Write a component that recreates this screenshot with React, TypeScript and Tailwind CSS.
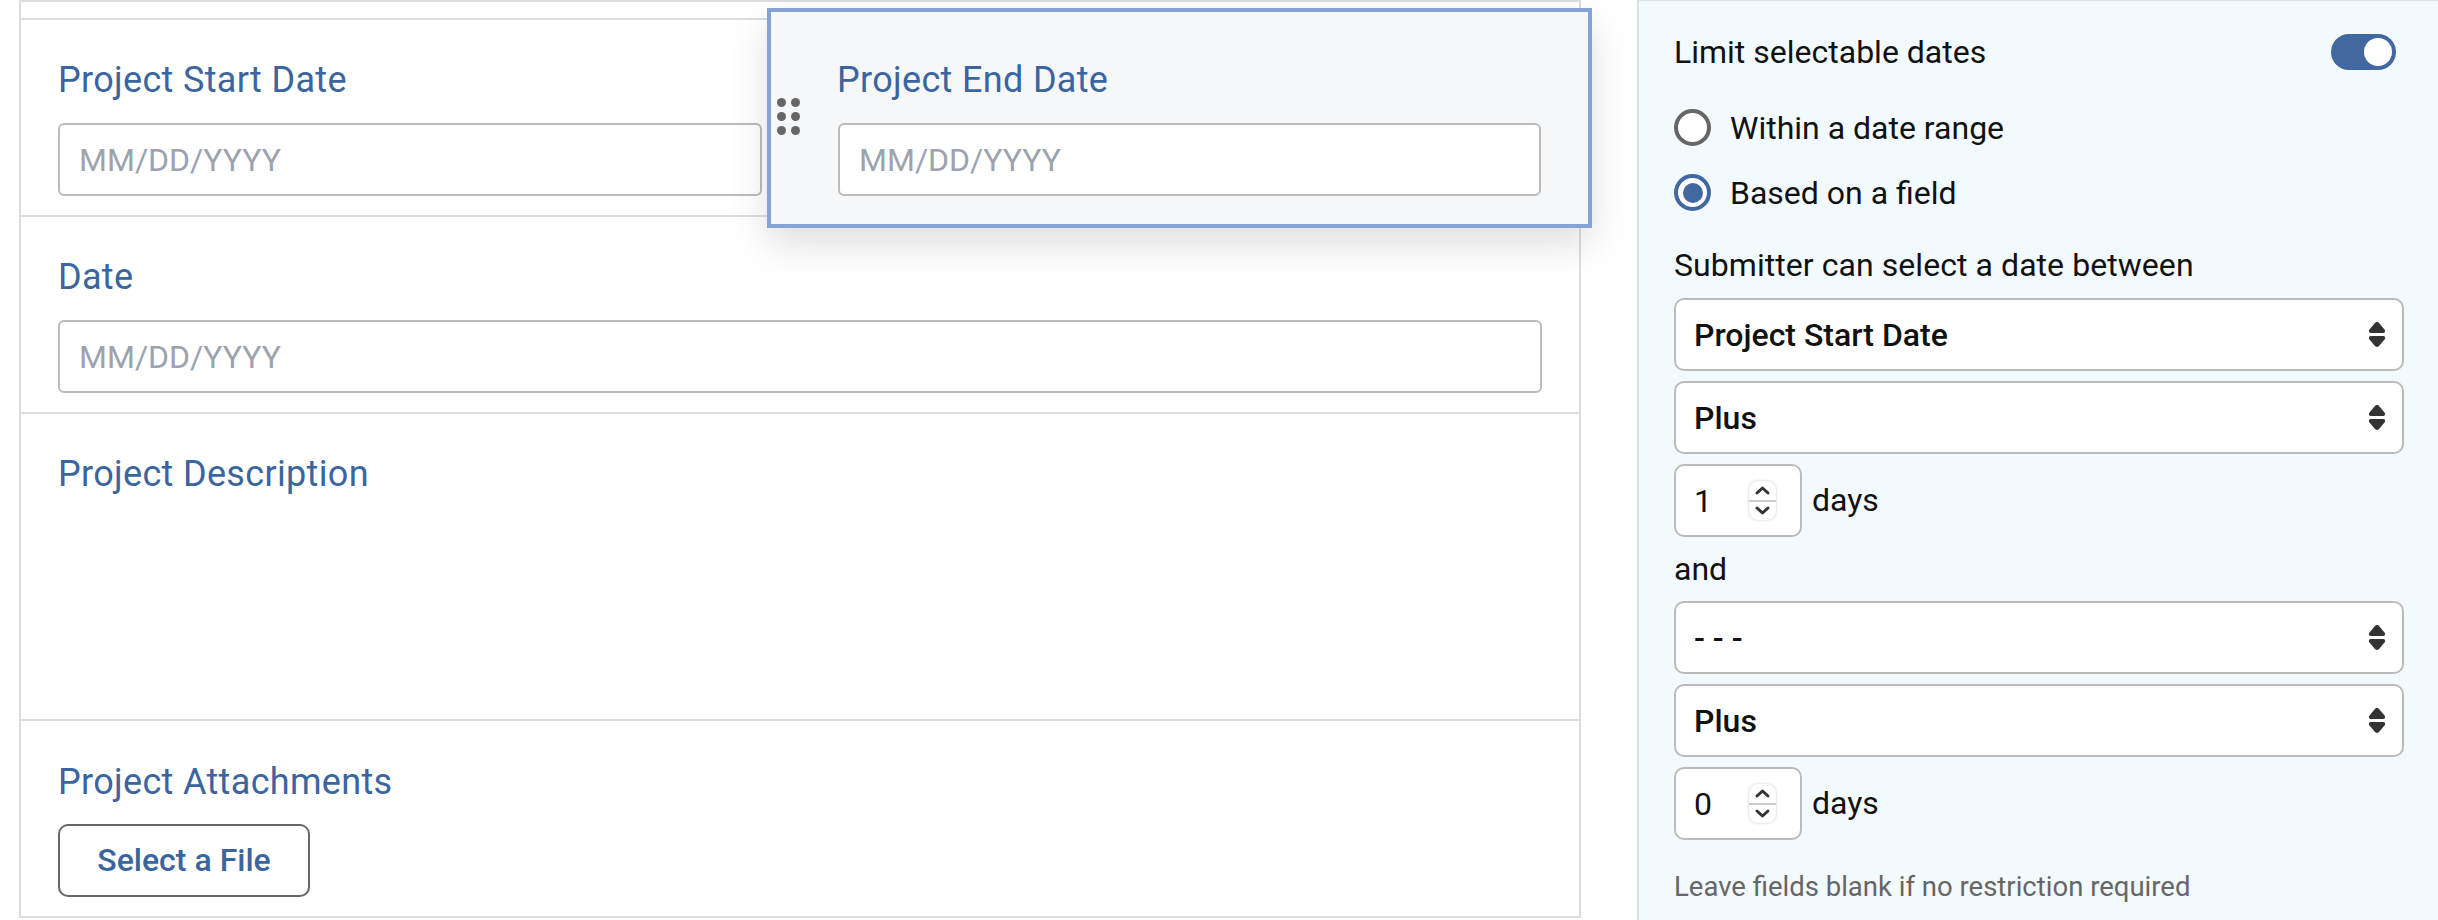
function DateInput({ className = '' }: { className?: string }) {
  return (
    <input
      readOnly
      placeholder="MM/DD/YYYY"
      className={`block h-[73px] rounded-[6px] border-2 border-[#bbbbbb] bg-white px-[19px] text-[32px] outline-none placeholder:text-[#9ca3af] ${className}`}
    />
  );
}

function FieldLabel({ children, className = '' }: { children: string; className?: string }) {
  return <div className={`h-[48px] pt-[1px] text-[36px] leading-[48px] tracking-[0.33px] text-[#3b659e] ${className}`}>{children}</div>;
}

function Row({ className = '', children }: { className?: string; children?: React.ReactNode }) {
  return <div className={`border-t-2 border-[#dddddd] pl-[37px] pt-[35px] ${className}`}>{children}</div>;
}

function SelectBox({ value, className = '' }: { value: string; className?: string }) {
  return (
    <div className={`flex h-[73px] items-center justify-between rounded-[10px] border-2 border-[#bbbbbb] bg-white pl-[18px] pr-[15px] text-[32px] font-medium text-[#111111] ${className}`}>
      <span>{value}</span>
      <svg width="20" height="27" viewBox="0 0 18 26" fill="#333333">
        <path d="M9 1 C10 1 10.8 1.6 11.4 2.3 L16.4 8.4 C17.4 9.7 16.6 11.5 15 11.5 H3 C1.4 11.5 0.6 9.7 1.6 8.4 L6.6 2.3 C7.2 1.6 8 1 9 1 Z" />
        <path d="M9 25 C10 25 10.8 24.4 11.4 23.7 L16.4 17.6 C17.4 16.3 16.6 14.5 15 14.5 H3 C1.4 14.5 0.6 16.3 1.6 17.6 L6.6 23.7 C7.2 24.4 8 25 9 25 Z" />
      </svg>
    </div>
  );
}

function NumberRow({ value, className = '' }: { value: string; className?: string }) {
  return (
    <div className={`flex items-center gap-[10px] ${className}`}>
      <div className="flex h-[73px] w-[128px] items-center justify-between rounded-[10px] border-2 border-[#bbbbbb] bg-white pl-[18px] pr-[24px] text-[32px] text-[#111111]">
        <span>{value}</span>
        <div className="flex h-[39px] w-[27px] flex-col overflow-hidden rounded-[9px] bg-white shadow-[0_0_3px_rgba(0,0,0,0.22)]">
          <div className="flex flex-1 items-center justify-center border-b border-[#cccccc]">
            <svg width="17" height="11" viewBox="0 0 17 11" fill="none" stroke="#333333" strokeWidth="3" strokeLinecap="round" strokeLinejoin="round">
              <path d="M3 8 L8.5 3 L14 8" />
            </svg>
          </div>
          <div className="flex flex-1 items-center justify-center border-t border-[#cccccc]">
            <svg width="17" height="11" viewBox="0 0 17 11" fill="none" stroke="#333333" strokeWidth="3" strokeLinecap="round" strokeLinejoin="round">
              <path d="M3 3 L8.5 8 L14 3" />
            </svg>
          </div>
        </div>
      </div>
      <span className="pb-[2px] text-[32px] text-[#111111]">days</span>
    </div>
  );
}

function Radio({ label, checked = false, className = '' }: { label: string; checked?: boolean; className?: string }) {
  return (
    <div className={`flex h-[37px] items-center gap-[19px] text-[32px] text-[#111111] ${className}`}>
      <span className={`flex size-[37px] items-center justify-center rounded-full border-[4px] bg-white ${checked ? 'border-[#41699f]' : 'border-[#666666]'}`}>
        {checked && <span className="size-[20px] rounded-full bg-[#41699f]" />}
      </span>
      {label}
    </div>
  );
}

export default function App() {
  return (
    <div className="relative flex h-[920px] w-[2438px] overflow-hidden bg-white font-['Roboto',sans-serif]">
      <div className="ml-[19px] h-[918px] w-[1562px] border-x-2 border-t-2 border-[#dddddd]">
        <div className="h-[16px]" />
        <Row className="h-[197px]">
          <FieldLabel>Project Start Date</FieldLabel>
          <DateInput className="mt-[20px] w-[704px]" />
        </Row>
        <Row className="h-[197px]">
          <FieldLabel>Date</FieldLabel>
          <DateInput className="mt-[20px] w-[1484px]" />
        </Row>
        <Row className="h-[307px]">
          <FieldLabel>Project Description</FieldLabel>
        </Row>
        <Row className="h-[199px] border-b-2">
          <FieldLabel className="mt-[1px]">Project Attachments</FieldLabel>
          <button className="mt-[19px] h-[73px] w-[252px] rounded-[10px] border-2 border-[#666666] bg-white pb-[2px] text-[32px] font-medium text-[#3b659e]">
            Select a File
          </button>
        </Row>
      </div>

      {/* field being dragged, floats over the form */}
      <div className="absolute left-[767px] top-[8px] h-[220px] w-[825px] border-4 border-[#85a3d4] bg-[#f6f7f9] pl-[66px] pt-[43px] shadow-[0_16px_36px_rgba(0,0,0,0.13)]">
        <div className="absolute left-[6px] top-[86px] grid grid-cols-2 gap-x-[5px] gap-y-[5px]">
          {[0, 1, 2, 3, 4, 5].map((i) => (
            <span key={i} className="size-[9px] rounded-full bg-[#666666]" />
          ))}
        </div>
        <FieldLabel>Project End Date</FieldLabel>
        <DateInput className="ml-[1px] mt-[20px] w-[703px]" />
      </div>

      <div className="ml-[56px] flex-1 border-l-2 border-t border-[#d9e0e5] bg-[#f3fafe] pl-[35px] pr-[34px] pt-[33px] text-[32px] text-[#111111]">
        <div className="flex h-[36px] items-center justify-between pr-[8px]">
          <span>Limit selectable dates</span>
          <div className="flex h-[36px] w-[65px] items-center justify-end rounded-full bg-[#41699f] pr-[4px]">
            <span className="size-[28px] rounded-full bg-white" />
          </div>
        </div>
        <Radio label="Within a date range" className="mt-[39px]" />
        <Radio label="Based on a field" checked className="mt-[28px]" />
        <div className="mt-[34px] h-[40px] leading-[40px] tracking-[0.06px]">Submitter can select a date between</div>
        <SelectBox value="Project Start Date" className="mt-[13px]" />
        <SelectBox value="Plus" className="mt-[10px]" />
        <NumberRow value="1" className="mt-[10px]" />
        <div className="mt-[12px] h-[40px] leading-[40px]">and</div>
        <SelectBox value="- - -" className="mt-[12px]" />
        <SelectBox value="Plus" className="mt-[10px]" />
        <NumberRow value="0" className="mt-[10px]" />
        <div className="mt-[27px] h-[40px] text-[27.5px] leading-[40px] text-[#666666]">Leave fields blank if no restriction required</div>
      </div>
    </div>
  );
}
